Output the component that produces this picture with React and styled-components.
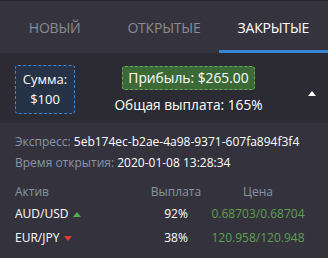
import React from 'react';
import styled, { createGlobalStyle } from 'styled-components';

const Global = createGlobalStyle`
  html, body {
    margin: 0;
    padding: 0;
    background: #34333d;
  }
  body {
    font-family: "Open Sans", "Liberation Sans", sans-serif;
    width: 328px;
    height: 258px;
    overflow: hidden;
  }
`;

const Panel = styled.div`
  width: 328px;
  height: 258px;
  background: #34333d;
  border-top: 1px solid #24232a;
  box-sizing: border-box;
`;

const Tabs = styled.div`
  display: grid;
  grid-template-columns: repeat(3, 1fr);
  height: 52px;
  background: #35343e;
`;

const Tab = styled.div`
  display: flex;
  align-items: center;
  justify-content: center;
  font-size: 14px;
  letter-spacing: -0.2px;
  text-transform: uppercase;
  color: ${p => (p.active ? '#ffffff' : '#8b8a93')};
  border-bottom: 3px solid ${p => (p.active ? '#3a86d0' : 'transparent')};
  padding-top: 3px;
  box-sizing: border-box;
`;

const Summary = styled.div`
  display: flex;
  align-items: center;
  background: #2c2b33;
  padding: 11px 0 9px 15px;
`;

const AmountBox = styled.div`
  width: 60px;
  height: 49px;
  box-sizing: border-box;
  border: 1px dashed #3a86d0;
  border-radius: 3px;
  background: #263246;
  color: #fff;
  font-size: 13px;
  line-height: 20px;
  text-align: center;
  padding-top: 3px;
`;

const Middle = styled.div`
  flex: 1;
  display: flex;
  flex-direction: column;
  align-items: center;
  gap: 6px;
  padding-left: 4px;
  margin-top: 2px;
`;

const Profit = styled.div`
  background: #3c6a37;
  border: 1px dashed #6aa55a;
  border-radius: 3px;
  color: #fff;
  font-size: 13.8px;
  line-height: 22px;
  padding: 0 5px;
`;

const Payout = styled.div`
  color: #fff;
  font-size: 13.7px;
  line-height: 18px;
`;

const Toggle = styled.div`
  width: 28px;
  display: flex;
  justify-content: center;
  padding-top: 8px;
  padding-right: 2px;
`;

const Caret = styled.span`
  width: 0;
  height: 0;
  border-left: 4px solid transparent;
  border-right: 4px solid transparent;
  border-${p => (p.down ? 'top' : 'bottom')}: 5px solid ${p => p.color};
  display: inline-block;
`;

const Details = styled.div`
  padding: 8px 0 0 15px;
  font-size: 12px;
  line-height: 21px;
`;

const Line = styled.div`
  color: #fff;
  white-space: nowrap;
`;

const Label = styled.span`
  color: #8594ad;
`;

const Table = styled.div`
  display: grid;
  grid-template-columns: 1fr 70px 94px;
  padding: 9px 23px 0 15px;
  font-size: 12px;
  align-items: center;
`;

const Head = styled.div`
  color: #8a93a6;
  line-height: 20px;
  text-align: ${p => p.align || 'left'};
`;

const Cell = styled.div`
  height: 24px;
  line-height: 24px;
  white-space: nowrap;
  color: ${p => p.color || '#fff'};
  display: flex;
  align-items: center;
  justify-content: ${p => (p.align === 'center' ? 'center' : 'flex-start')};
  gap: 5px;
`;

const rows = [
  { asset: 'AUD/USD', up: true, payout: '92%', price: '0.68703/0.68704' },
  { asset: 'EUR/JPY', up: false, payout: '38%', price: '120.958/120.948' },
];

export default function App() {
  return (
    <Panel>
      <Global />
      <Tabs>
        <Tab>Новый</Tab>
        <Tab>Открытые</Tab>
        <Tab active>Закрытые</Tab>
      </Tabs>
      <Summary>
        <AmountBox>
          Сумма:
          <br />
          $100
        </AmountBox>
        <Middle>
          <Profit>Прибыль: $265.00</Profit>
          <Payout>Общая выплата: 165%</Payout>
        </Middle>
        <Toggle>
          <Caret color="#ffffff" />
        </Toggle>
      </Summary>
      <Details>
        <Line>
          <Label>Экспресс:</Label> 5eb174ec-b2ae-4a98-9371-607fa894f3f4
        </Line>
        <Line>
          <Label>Время открытия:</Label> 2020-01-08 13:28:34
        </Line>
      </Details>
      <Table>
        <Head>Актив</Head>
        <Head align="center">Выплата</Head>
        <Head align="center">Цена</Head>
        {rows.map(r => (
          <React.Fragment key={r.asset}>
            <Cell>
              {r.asset}
              <Caret down={!r.up} color={r.up ? '#4caf50' : '#e53935'} />
            </Cell>
            <Cell align="center">{r.payout}</Cell>
            <Cell align="center" color="#5f9f4f">{r.price}</Cell>
          </React.Fragment>
        ))}
      </Table>
    </Panel>
  );
}
